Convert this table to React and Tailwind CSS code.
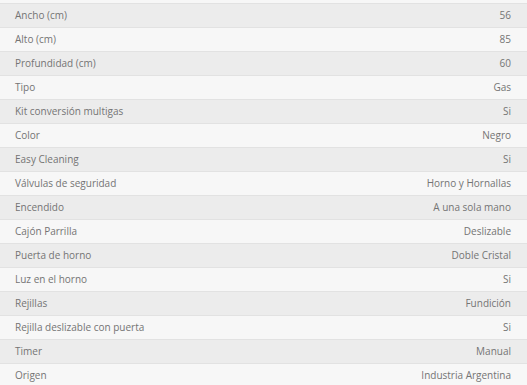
const specs = [
  ['Ancho (cm)', '56'],
  ['Alto (cm)', '85'],
  ['Profundidad (cm)', '60'],
  ['Tipo', 'Gas'],
  ['Kit conversión multigas', 'Si'],
  ['Color', 'Negro'],
  ['Easy Cleaning', 'Si'],
  ['Válvulas de seguridad', 'Horno y Hornallas'],
  ['Encendido', 'A una sola mano'],
  ['Cajón Parrilla', 'Deslizable'],
  ['Puerta de horno', 'Doble Cristal'],
  ['Luz en el horno', 'Si'],
  ['Rejillas', 'Fundición'],
  ['Rejilla deslizable con puerta', 'Si'],
  ['Timer', 'Manual'],
  ['Origen', 'Industria Argentina'],
];

export default function App() {
  return (
    <div className="w-[527px] h-[385px] overflow-hidden bg-[#f7f7f7] font-['Open_Sans',sans-serif] text-[10px] text-[#747474]">
      <div className="h-[3px]" />
      {specs.map(([label, value], i) => (
        <div
          key={label}
          className={`flex h-[24px] items-center justify-between border-t border-[#e2e2e2] pl-[15px] pr-[16px] ${i % 2 === 0 ? 'bg-[#ececec]' : 'bg-[#f7f7f7]'}`}
        >
          <span>{label}</span>
          <span>{value}</span>
        </div>
      ))}
    </div>
  );
}
